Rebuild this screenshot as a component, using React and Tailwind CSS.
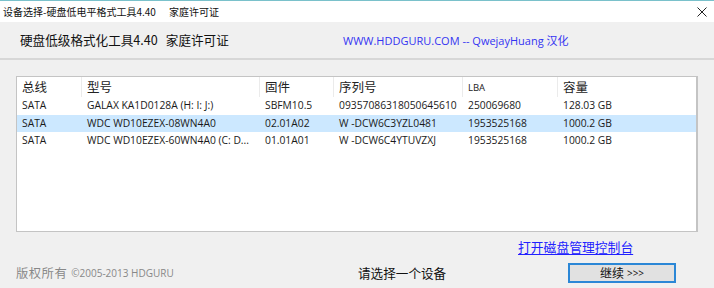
import React from "react";

const cjk = "font-['Noto_Sans_CJK_SC','Noto_Sans',sans-serif]";
const lat = "font-['Open_Sans','Noto_Sans_CJK_SC',sans-serif]";

const cols = "grid grid-cols-[64px_178px_74px_129px_95px_140px]";

const rows = [
  ["SATA", "GALAX KA1D0128A (H: I: J:)", "SBFM10.5", "09357086318050645610", "250069680", "128.03 GB", false],
  ["SATA", "WDC WD10EZEX-08WN4A0", "02.01A02", "W -DCW6C3YZL0481", "1953525168", "1000.2 GB", true],
  ["SATA", "WDC WD10EZEX-60WN4A0 (C: D...", "01.01A01", "W -DCW6C4YTUVZXJ", "1953525168", "1000.2 GB", false],
];

export default function App() {
  return (
    <div className={`w-[714px] h-[288px] bg-[#f0f0f0] overflow-hidden flex flex-col ${cjk}`}>
      {/* title bar */}
      <div className="h-[22px] shrink-0 bg-white border-t border-[#7ac1cb] flex items-center justify-between pl-[3px] pr-[7px]">
        <div className="text-[10px] leading-none text-[#111] flex gap-[13px]">
          <span>设备选择-硬盘低电平格式工具4.40</span>
          <span>家庭许可证</span>
        </div>
        <svg width="10" height="10" viewBox="0 0 10 10" className="mt-[1px]">
          <path d="M0.5 0.5 L9.5 9.5 M9.5 0.5 L0.5 9.5" stroke="#222" strokeWidth="1" />
        </svg>
      </div>
      {/* header */}
      <div className="h-[36px] shrink-0 flex items-center pl-[20px]">
        <span className="w-[323px] text-[12.6px] text-[#111] leading-none">
          硬盘低级格式化工具4.40<span className="ml-[8px]">家庭许可证</span>
        </span>
        <span className={`text-[11px] text-[#3434f2] leading-none ${lat}`}>
          WWW.HDDGURU.COM -- QwejayHuang <span className={cjk}>汉化</span>
        </span>
      </div>
      <div className="h-[2px] shrink-0 bg-[#d7d7d7]" />
      {/* table */}
      <div className="ml-[16px] mt-[16px] w-[682px] h-[156px] shrink-0 bg-white border border-[#c4c4c4] border-r-2">
        <div className={`${cols} h-[20px] items-center`}>
          {["总线", "型号", "固件", "序列号", "LBA", "容量"].map((h, i) => (
            <div
              key={i}
              className={`h-full flex items-center pl-[5px] ${i > 0 ? "border-l border-[#ebebeb]" : ""} ${
                h === "LBA" ? `${lat} text-[9.5px] pt-[2px]` : "text-[12.5px]"
              } text-[#222]`}
            >
              {h}
            </div>
          ))}
        </div>
        {rows.map((r, idx) => (
          <div
            key={idx}
            className={`${cols} h-[17.5px] items-center text-[10.3px] text-[#1a1a1a] ${lat} ${
              r[6] ? "bg-[#cce8ff]" : ""
            }`}
          >
            {r.slice(0, 6).map((c, i) => (
              <div key={i} className={`${i === 0 ? "pl-[5px]" : "pl-[6px]"} whitespace-nowrap overflow-hidden`}>
                {c}
              </div>
            ))}
          </div>
        ))}
      </div>
      {/* link */}
      <div className="h-[30px] shrink-0 flex items-center pl-[518px] pt-[1px]">
        <span className="text-[12.8px] leading-none text-[#2020ff] underline underline-offset-[2px]">
          打开磁盘管理控制台
        </span>
      </div>
      {/* bottom */}
      <div className="flex items-center h-[22px] shrink-0">
        <div className="w-[358px] pl-[16px] flex items-center text-[#888]">
          <span className="text-[12.3px] tracking-[0.5px]">版权所有</span>
          <span className={`${lat} text-[10px] ml-[4px]`}>©2005-2013 HDGURU</span>
        </div>
        <span className="text-[12.6px] text-[#111] w-[210px]">请选择一个设备</span>
        <div className="w-[108px] h-[20px] border-2 border-[#2b87d6] bg-[#e1e1e1] flex items-center justify-center text-[12px] text-[#111] leading-none">
          继续<span className={`${lat} text-[10px] ml-[3px]`}>&gt;&gt;&gt;</span>
        </div>
      </div>
    </div>
  );
}
